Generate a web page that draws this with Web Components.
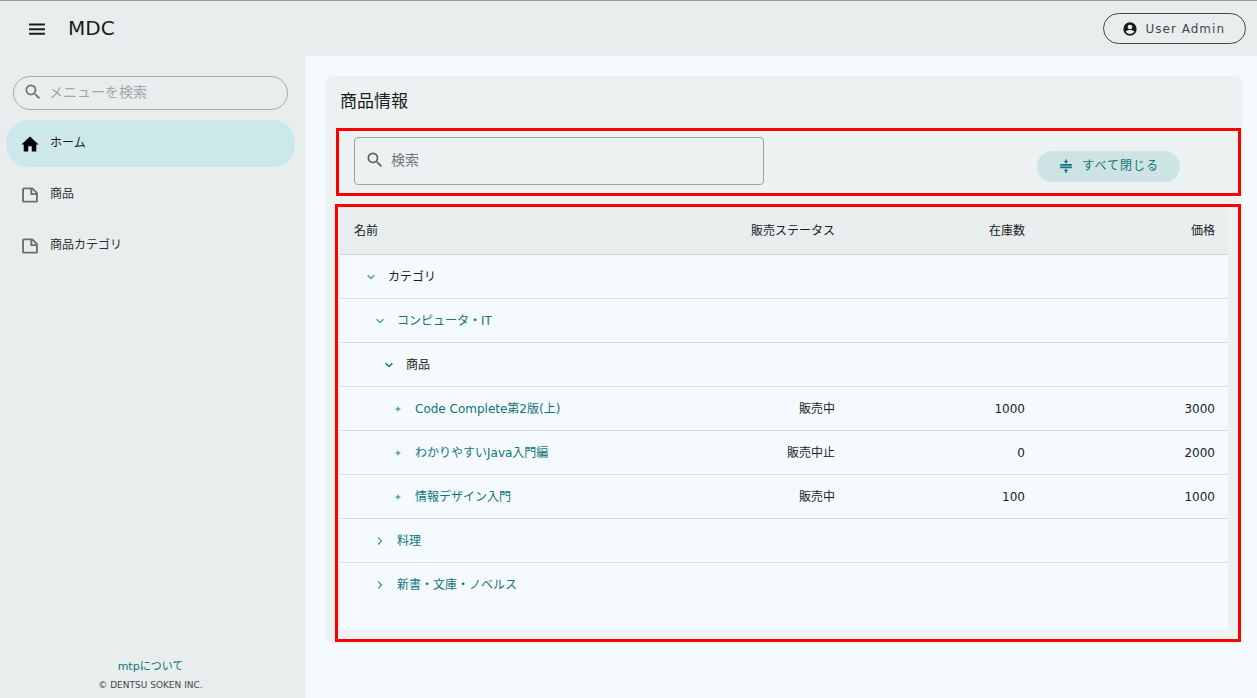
<!DOCTYPE html>
<html lang="ja">
<head>
<meta charset="utf-8">
<meta name="viewport" content="width=device-width, initial-scale=1">
<title>MDC - 商品情報</title>
<style>
  :root {
    --surface: #e8eeee;
    --page: #f4fafd;
    --card: #ecf2f2;
    --primary: #107478;
    --selected: #cce8eb;
    --tonal: #cee3e3;
    --text: #191c1d;
    --line: #d8dfe1;
    --mark: #ff0000;
  }
  body {
    margin: 0;
    background: var(--page);
    color: var(--text);
    font: 12px/18px "DejaVu Sans", "Noto Sans CJK JP", sans-serif;
  }
</style>
</head>
<body>
<mdc-app>
  <mdc-top-bar slot="top" heading="MDC" user="User Admin"></mdc-top-bar>
  <mdc-side-nav slot="nav">
    <mdc-nav-item icon="home" selected>ホーム</mdc-nav-item>
    <mdc-nav-item icon="note">商品</mdc-nav-item>
    <mdc-nav-item icon="note">商品カテゴリ</mdc-nav-item>
  </mdc-side-nav>
  <mdc-card heading="商品情報">
    <mdc-toolbar></mdc-toolbar>
    <mdc-tree-table></mdc-tree-table>
  </mdc-card>
</mdc-app>

<script>
const ICONS = {
  menu: 'M2.5 19h19v-2.4h-19V19zm0-5.6h19V11h-19v2.4zm0-8v2.400h19V5.400z',
  search: 'M15.5 14h-.79l-.28-.27A6.47 6.47 0 0 0 16 9.5 6.5 6.5 0 1 0 9.5 16c1.61 0 3.09-.59 4.23-1.57l.27.28v.79l5 4.99L20.49 19l-4.99-5zm-6 0C7.01 14 5 11.99 5 9.5S7.01 5 9.5 5 14 7.01 14 9.5 11.99 14 9.5 14z',
  home: 'M9.600 22v-7h4.800v7h6v-9.500H23.500L12 2 .5 12.500H3.600V22z',
  note: 'M15.500 2H3.500A2 2 0 0 0 1.500 4v16a2 2 0 0 0 2 2h17a2 2 0 0 0 2-2V9zM4 19.600V4.400h8.500V12h7.500v7.600zM15 4.800 19.600 9.600H15z',
  user: 'M12 2a10 10 0 1 0 0 20 10 10 0 0 0 0-20zm0 3.500a3.500 3.500 0 1 1 0 7 3.500 3.500 0 0 1 0-7zM12 19.500c-2.500 0-5.200-1.200-6.600-3.600.8-1.600 4.400-2.400 6.600-2.400s5.800.8 6.600 2.400c-1.400 2.400-4.100 3.600-6.600 3.600z',
  collapse: 'M2 8.500h20v3H2zM2 13h20v3H2zM8 4h2.700V1h2.600v3H16l-4 4zM8 20.500h2.700v3h2.600v-3H16l-4-4z',
  down: 'M7 8 12 12.800 17 8l1.700 1.700L12 16.200 5.300 9.700z',
  right: 'M8 17 12.800 12 8 7l1.700-1.700L16.200 12l-6.500 6.700z',
  plus: 'M10.800 8h2.400v2.800H16v2.400h-2.800V16h-2.400v-2.800H8v-2.400h2.800z'
};
const icon = (name, size) =>
  `<svg viewBox="0 0 24 24" width="${size}" height="${size}" fill="currentColor" aria-hidden="true"><path fill-rule="evenodd" d="${ICONS[name]}"/></svg>`;

const BASE = `
  :host, *, *::before, *::after { box-sizing: border-box; }
  :host { display: block; }
  svg { display: block; flex: none; }
  button, input { font: inherit; color: inherit; margin: 0; }
  button { cursor: pointer; }
  a { color: var(--primary); text-decoration: none; }
`;

class BaseElement extends HTMLElement {
  connectedCallback() {
    if (this.shadowRoot) return;
    this.attachShadow({ mode: 'open' }).innerHTML =
      `<style>${BASE}${this.styles()}</style>${this.markup()}`;
  }
}

customElements.define('mdc-app', class extends BaseElement {
  styles() { return `
    :host { display: flex; flex-direction: column; min-height: 100vh; }
    .body { display: flex; flex: 1; }
    main { flex: 1; min-width: 0; padding: 20px 15px 20px 21px; }
  `; }
  markup() { return `
    <slot name="top"></slot>
    <div class="body"><slot name="nav"></slot><main><slot></slot></main></div>
  `; }
});

customElements.define('mdc-top-bar', class extends BaseElement {
  styles() { return `
    header { display: flex; align-items: center; height: 56px; padding: 0 11px 0 27px;
      background: var(--surface); border-top: 1px solid #96999b; }
    .menu { padding: 0; border: 0; background: none; }
    h1 { flex: 1; margin: 0 0 0 21px; padding-bottom: 2px; font-size: 20px; line-height: 24px; font-weight: 400; }
    .user { display: flex; align-items: center; gap: 8px; height: 31px; padding: 0 20px 0 18px;
      border: 1px solid #3f4849; border-radius: 16px; background: none; letter-spacing: 1px; color: #3f4849; }
    .user svg { color: var(--text); }
  `; }
  markup() { return `
    <header>
      <button class="menu" type="button" aria-label="メニュー">${icon('menu', 20)}</button>
      <h1>${this.getAttribute('heading')}</h1>
      <button class="user" type="button">${icon('user', 16)}<span>${this.getAttribute('user')}</span></button>
    </header>
  `; }
});

customElements.define('mdc-side-nav', class extends BaseElement {
  styles() { return `
    :host { display: flex; flex-direction: column; flex: none; width: 305px; padding: 20px 10px 4px 6px;
      background: var(--surface); }
    .search { display: flex; align-items: center; gap: 6px; height: 34px; margin: 0 7px 10px;
      padding: 0 10px 2px 9px; border: 1px solid #a3abab; border-radius: 17px; color: #6b7172; }
    input { flex: 1; min-width: 0; padding: 0; border: 0; outline: 0; background: none; font-size: 14px; line-height: 20px; }
    input::placeholder { color: #a0a6a7; opacity: 1; }
    nav { display: flex; flex-direction: column; gap: 4px; flex: 1; }
    footer { text-align: center; font-size: 9px; line-height: 18px; color: #3f4849; }
    footer a { display: block; font-size: 11px; line-height: 18px; }
  `; }
  markup() { return `
    <label class="search">${icon('search', 20)}<input type="text" placeholder="メニューを検索" aria-label="メニューを検索"></label>
    <nav><slot></slot></nav>
    <footer><a href="#about">mtpについて</a>© DENTSU SOKEN INC.</footer>
  `; }
});

customElements.define('mdc-nav-item', class extends BaseElement {
  styles() { return `
    a { display: flex; align-items: center; gap: 11px; height: 47px; padding: 0 15px; border-radius: 22px; color: #2b2f30; }
    svg { color: #6b7172; }
    span { padding-bottom: 2px; }
    :host([selected]) a { background: var(--selected); color: var(--text); }
    :host([selected]) svg { color: #000; }
  `; }
  markup() { return `<a href="#">${icon(this.getAttribute('icon'), 18)}<span><slot></slot></span></a>`; }
});

customElements.define('mdc-card', class extends BaseElement {
  styles() { return `
    section { padding: 12px 1px 2px 9px; border-radius: 8px; background: var(--card); }
    h2 { margin: 0 0 14px 5px; font-size: 17px; line-height: 26px; font-weight: 400; }
  `; }
  markup() { return `<section><h2>${this.getAttribute('heading')}</h2><slot></slot></section>`; }
});

customElements.define('mdc-toolbar', class extends BaseElement {
  styles() { return `
    :host { margin: 0 0 8px 1px; }
    .bar { display: flex; justify-content: space-between; align-items: center; gap: 20px;
      padding: 6px 58px 8px 15px; border: 3px solid var(--mark); }
    .field { display: flex; align-items: center; gap: 6px; flex: 0 1 410px; height: 48px; padding: 0 10px 2px;
      border: 1px solid #9da4a4; border-radius: 4px; color: #5c6263; }
    input { flex: 1; min-width: 0; padding: 0; border: 0; outline: 0; background: none; font-size: 14px; line-height: 20px; }
    input::placeholder { color: #70777a; opacity: 1; }
    button { display: flex; align-items: center; gap: 9px; height: 31px; margin-top: 10px; padding: 0 21px 0 22px;
      border: 0; border-radius: 16px; background: var(--tonal); color: var(--primary); letter-spacing: 1px; }
  `; }
  markup() { return `
    <div class="bar">
      <label class="field">${icon('search', 20)}<input type="text" placeholder="検索" aria-label="検索"></label>
      <button type="button">${icon('collapse', 14)}<span>すべて閉じる</span></button>
    </div>
  `; }
});

const ROWS = [
  { level: 0, mark: 'down', name: 'カテゴリ' },
  { level: 1, mark: 'down', name: 'コンピュータ・IT', link: true },
  { level: 2, mark: 'down', name: '商品', strong: true },
  { level: 3, mark: 'plus', name: 'Code Complete第2版(上)', link: true, cells: ['販売中', '1000', '3000'] },
  { level: 3, mark: 'plus', name: 'わかりやすいJava入門編', link: true, cells: ['販売中止', '0', '2000'] },
  { level: 3, mark: 'plus', name: '情報デザイン入門', link: true, cells: ['販売中', '100', '1000'] },
  { level: 1, mark: 'right', name: '料理', link: true },
  { level: 1, mark: 'right', name: '新書・文庫・ノベルス', link: true }
];

customElements.define('mdc-tree-table', class extends BaseElement {
  styles() { return `
    .frame { padding: 0 10px 9px 2px; border: 3px solid var(--mark); }
    .sheet { padding-bottom: 23px; background: var(--page); }
    table { width: 100%; table-layout: fixed; border-collapse: separate; border-spacing: 0; }
    .num { width: 190px; }
    th, td { height: 44px; padding: 0 13px 0 14px; text-align: right; font-weight: 400; border-bottom: 1px solid var(--line); }
    th { height: 48px; background: var(--surface); border-color: #d0d8d8; }
    th:first-child { text-align: left; }
    tbody tr:last-child td { border-bottom-color: transparent; }
    .name { display: flex; align-items: center; gap: 9px; padding-left: calc(9px + var(--level) * 9px); }
    .toggle { display: flex; align-items: center; justify-content: center; width: 16px; height: 16px; padding: 1px 0 0;
      border: 0; background: none; color: var(--primary); opacity: .7; }
    .strong { opacity: 1; }
  `; }
  markup() {
    const row = r => {
      const glyph = icon(r.mark, 14);
      const toggle = r.mark === 'plus'
        ? `<span class="toggle">${glyph}</span>`
        : `<button type="button" class="toggle${r.strong ? ' strong' : ''}" aria-label="${r.name}" aria-expanded="${r.mark === 'down'}">${glyph}</button>`;
      const name = r.link ? `<a href="#">${r.name}</a>` : `<span>${r.name}</span>`;
      const cells = (r.cells || ['', '', '']).map(c => `<td>${c}</td>`).join('');
      return `<tr><td><div class="name" style="--level:${r.level}">${toggle}${name}</div></td>${cells}</tr>`;
    };
    return `
      <div class="frame"><div class="sheet"><table>
        <colgroup><col><col class="num"><col class="num"><col class="num"></colgroup>
        <thead><tr><th scope="col">名前</th><th scope="col">販売ステータス</th><th scope="col">在庫数</th><th scope="col">価格</th></tr></thead>
        <tbody>${ROWS.map(row).join('')}</tbody>
      </table></div></div>
    `;
  }
});
</script>
</body>
</html>
